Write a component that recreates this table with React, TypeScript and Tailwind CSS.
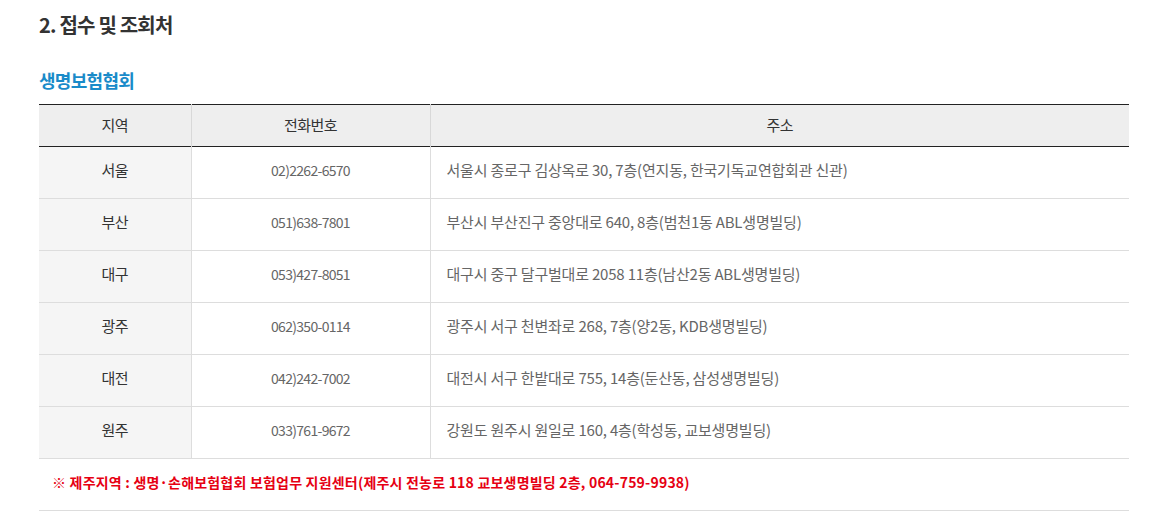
const rows = [
  { area: "서울", tel: "02)2262-6570", addr: "서울시 종로구 김상옥로 30, 7층(연지동, 한국기독교연합회관 신관)" },
  { area: "부산", tel: "051)638-7801", addr: "부산시 부산진구 중앙대로 640, 8층(범천1동 ABL생명빌딩)" },
  { area: "대구", tel: "053)427-8051", addr: "대구시 중구 달구벌대로 2058 11층(남산2동 ABL생명빌딩)" },
  { area: "광주", tel: "062)350-0114", addr: "광주시 서구 천변좌로 268, 7층(양2동, KDB생명빌딩)" },
  { area: "대전", tel: "042)242-7002", addr: "대전시 서구 한밭대로 755, 14층(둔산동, 삼성생명빌딩)" },
  { area: "원주", tel: "033)761-9672", addr: "강원도 원주시 원일로 160, 4층(학성동, 교보생명빌딩)" },
];

export default function App() {
  return (
    <div
      className="w-[1156px] h-[522px] bg-white px-[39px] pt-[10px]"
      style={{ fontFamily: '"Noto Sans CJK KR", "Noto Sans", sans-serif' }}
    >
      <h2 className="text-[20px] leading-[30px] font-bold text-[#333] tracking-[-0.8px]">
        2. 접수 및 조회처
      </h2>
      <h3 className="mt-[27px] text-[18px] leading-[26px] font-bold text-[#1a8bc9] tracking-[-0.7px]">
        생명보험협회
      </h3>
      <div className="mt-[11px] w-[1090px]">
        <table className="w-full border-collapse table-fixed text-[14px]">
          <colgroup>
            <col className="w-[152px]" />
            <col className="w-[239px]" />
            <col />
          </colgroup>
          <thead>
            <tr className="h-[42px] bg-[#eeeeee] border-t border-b border-[#222]">
              <th className="font-normal text-[15px] text-[#333] border-r border-[#d8d8d8] tracking-[-0.5px]">지역</th>
              <th className="font-normal text-[15px] text-[#333] border-r border-[#d8d8d8] tracking-[-0.5px]">전화번호</th>
              <th className="font-normal text-[15px] text-[#333] tracking-[-0.5px]">주소</th>
            </tr>
          </thead>
          <tbody>
            {rows.map((r) => (
              <tr key={r.area} className="h-[52px] border-b border-[#dddddd]">
                <td className="pb-[4px] bg-[#f5f5f5] text-center text-[15px] text-[#333] border-r border-[#dddddd] tracking-[-0.5px]">{r.area}</td>
                <td className="pb-[4px] text-center text-[#666] border-r border-[#dddddd] tracking-[-0.7px]">{r.tel}</td>
                <td className="pb-[4px] pl-[16px] text-[15px] text-[#666] tracking-[-0.2px]">{r.addr}</td>
              </tr>
            ))}
          </tbody>
        </table>
        <div className="h-[52px] flex items-center pl-[13px] pb-[4px] border-b border-[#dddddd]">
          <p className="text-[14px] font-bold text-[#e60012] tracking-[0.2px]">
            ※ 제주지역 : 생명·손해보험협회 보험업무 지원센터(제주시 전농로 118 교보생명빌딩 2층, 064-759-9938)
          </p>
        </div>
      </div>
    </div>
  );
}
